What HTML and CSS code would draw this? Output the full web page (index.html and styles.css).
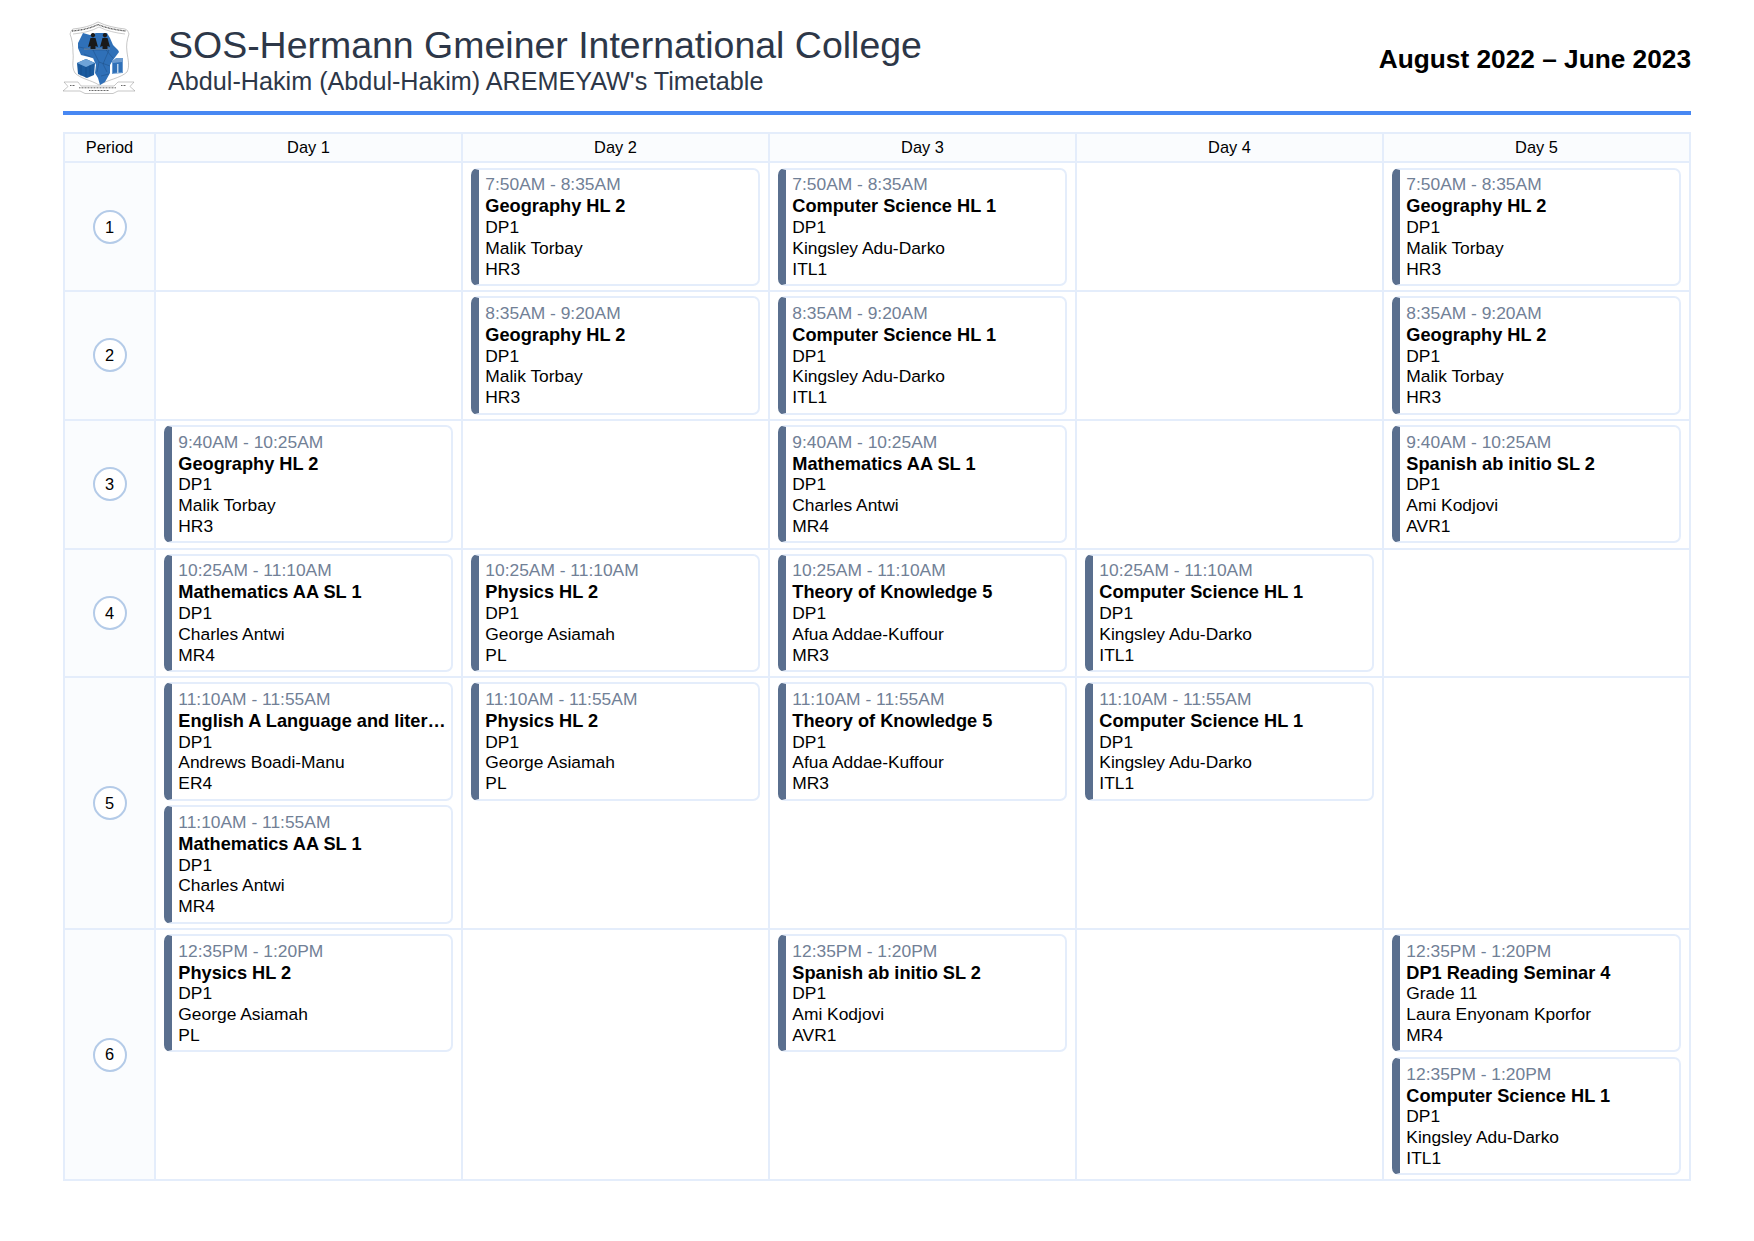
FILE: index.html
```html
<!DOCTYPE html>
<html lang="en">
<head>
  <meta charset="UTF-8" />
  <meta name="viewport" content="width=device-width, initial-scale=1.0" />
  <title>Timetable</title>
  <link rel="stylesheet" href="styles.css">
</head>
<body>
  <div class="page">
    <header class="top">
      <svg class="logo" viewBox="0 0 72 74" xmlns="http://www.w3.org/2000/svg">
        <path fill="#fff" stroke="#8f8f8f" stroke-width="0.5" d="M7 14C8 12 8 10 10 9C20 8 28 6 35 2C43 6 53 8 62 9C65 10 65 12 66 14C64 20 63 25 64 32C65 40 67 46 64 52C58 58 44 60 36 65C28 60 18 59 12 53C8 46 11 40 10 33C10 25 9 19 7 14Z"/>
        <path fill="none" stroke="#9a9a9a" stroke-width="0.5" d="M10 14C20 13 29 11 36 7C44 11 53 13 62 14"/>
        <path fill="none" stroke="#555" stroke-width="1.300" stroke-dasharray="1 0.500" d="M9 11C20 10 28 8 35 4.500C43 8 53 10 63 11"/>
        <path fill="#2f70b8" d="M20 13L27 15L33 13L44 13L47 18L50 25L55 30L56 32L50 40L47 45L47 53L42 62L37 65L35 58L32 53L33 45L30 38L26 37L18 35L15 28L15 23Z"/>
        <path fill="none" stroke="#16406e" stroke-width="0.350" d="M16 27L30 30L36 42L34 52M30 30L46 30L40 44L44 52M36 42L47 46M21 34L30 38M38 56L46 54M43 30L50 38"/>
        <path stroke="#8f8f8f" stroke-width="0.700" d="M21 29H47"/>
        <path fill="#1a5a9e" d="M14 43L23 39L32 43L31 55L24 58L15 54Z"/>
        <path fill="#6ea3d8" d="M14 43L23 39L32 43L23 47Z"/>
        <path stroke="#0f3f75" stroke-width="0.400" d="M23 47V58M18 45V56M27 45V56"/>
        <path fill="#6b9bd0" d="M49 41L53 38L60 38L60 53L49 54Z"/>
        <path fill="#2f70b8" d="M50 43L59 42L59 52L50 53Z"/>
        <path fill="#bcd3ea" d="M54 44H55.500V53H54Z"/>
        <path fill="#1a1a1a" d="M30 13a2.200 2.200 0 1 1-.1 0ZM25 27L27.500 18L32.500 18L35 27L32.500 26L32.500 29H27.500L27.500 26ZM42 13a2.200 2.200 0 1 1-.1 0ZM37 27L39.500 18L44.500 18L47 27L44.500 26L44.500 29H39.500L39.500 26Z"/>
        <path fill="#fff" stroke="#8f8f8f" stroke-width="0.500" d="M0 71L5 66.500L1 62H15L18 66H51L55 62H71L67 66.500L72 71H55L50 73.500H22L17 71Z"/>
        <path fill="none" stroke="#444" stroke-width="0.800" stroke-dasharray="1 0.500" d="M7 65.500H12M58 65.500H63M16 67.800H53M26 70.500H46"/>
      </svg>
      <div class="title-block">
        <h1>SOS-Hermann Gmeiner International College</h1>
        <h2>Abdul-Hakim (Abdul-Hakim) AREMEYAW's Timetable</h2>
      </div>
      <div class="range">August 2022 – June 2023</div>
    </header>

    <table class="timetable">
      <thead>
        <tr>
          <th class="period-col">Period</th>
          <th>Day 1</th>
          <th>Day 2</th>
          <th>Day 3</th>
          <th>Day 4</th>
          <th>Day 5</th>
        </tr>
      </thead>
      <tbody>
        <tr>
          <td class="period"><span class="num">1</span></td>
          <td></td>
          <td>
            <div class="card"><p class="time">7:50AM - 8:35AM</p><p class="subject">Geography HL 2</p><p>DP1</p><p>Malik Torbay</p><p>HR3</p></div>
          </td>
          <td>
            <div class="card"><p class="time">7:50AM - 8:35AM</p><p class="subject">Computer Science HL 1</p><p>DP1</p><p>Kingsley Adu-Darko</p><p>ITL1</p></div>
          </td>
          <td></td>
          <td>
            <div class="card"><p class="time">7:50AM - 8:35AM</p><p class="subject">Geography HL 2</p><p>DP1</p><p>Malik Torbay</p><p>HR3</p></div>
          </td>
        </tr>
        <tr>
          <td class="period"><span class="num">2</span></td>
          <td></td>
          <td>
            <div class="card"><p class="time">8:35AM - 9:20AM</p><p class="subject">Geography HL 2</p><p>DP1</p><p>Malik Torbay</p><p>HR3</p></div>
          </td>
          <td>
            <div class="card"><p class="time">8:35AM - 9:20AM</p><p class="subject">Computer Science HL 1</p><p>DP1</p><p>Kingsley Adu-Darko</p><p>ITL1</p></div>
          </td>
          <td></td>
          <td>
            <div class="card"><p class="time">8:35AM - 9:20AM</p><p class="subject">Geography HL 2</p><p>DP1</p><p>Malik Torbay</p><p>HR3</p></div>
          </td>
        </tr>
        <tr>
          <td class="period"><span class="num">3</span></td>
          <td>
            <div class="card"><p class="time">9:40AM - 10:25AM</p><p class="subject">Geography HL 2</p><p>DP1</p><p>Malik Torbay</p><p>HR3</p></div>
          </td>
          <td></td>
          <td>
            <div class="card"><p class="time">9:40AM - 10:25AM</p><p class="subject">Mathematics AA SL 1</p><p>DP1</p><p>Charles Antwi</p><p>MR4</p></div>
          </td>
          <td></td>
          <td>
            <div class="card"><p class="time">9:40AM - 10:25AM</p><p class="subject">Spanish ab initio SL 2</p><p>DP1</p><p>Ami Kodjovi</p><p>AVR1</p></div>
          </td>
        </tr>
        <tr>
          <td class="period"><span class="num">4</span></td>
          <td>
            <div class="card"><p class="time">10:25AM - 11:10AM</p><p class="subject">Mathematics AA SL 1</p><p>DP1</p><p>Charles Antwi</p><p>MR4</p></div>
          </td>
          <td>
            <div class="card"><p class="time">10:25AM - 11:10AM</p><p class="subject">Physics HL 2</p><p>DP1</p><p>George Asiamah</p><p>PL</p></div>
          </td>
          <td>
            <div class="card"><p class="time">10:25AM - 11:10AM</p><p class="subject">Theory of Knowledge 5</p><p>DP1</p><p>Afua Addae-Kuffour</p><p>MR3</p></div>
          </td>
          <td>
            <div class="card"><p class="time">10:25AM - 11:10AM</p><p class="subject">Computer Science HL 1</p><p>DP1</p><p>Kingsley Adu-Darko</p><p>ITL1</p></div>
          </td>
          <td></td>
        </tr>
        <tr>
          <td class="period"><span class="num">5</span></td>
          <td>
            <div class="card"><p class="time">11:10AM - 11:55AM</p><p class="subject">English A Language and liter…</p><p>DP1</p><p>Andrews Boadi-Manu</p><p>ER4</p></div>
            <div class="card"><p class="time">11:10AM - 11:55AM</p><p class="subject">Mathematics AA SL 1</p><p>DP1</p><p>Charles Antwi</p><p>MR4</p></div>
          </td>
          <td>
            <div class="card"><p class="time">11:10AM - 11:55AM</p><p class="subject">Physics HL 2</p><p>DP1</p><p>George Asiamah</p><p>PL</p></div>
          </td>
          <td>
            <div class="card"><p class="time">11:10AM - 11:55AM</p><p class="subject">Theory of Knowledge 5</p><p>DP1</p><p>Afua Addae-Kuffour</p><p>MR3</p></div>
          </td>
          <td>
            <div class="card"><p class="time">11:10AM - 11:55AM</p><p class="subject">Computer Science HL 1</p><p>DP1</p><p>Kingsley Adu-Darko</p><p>ITL1</p></div>
          </td>
          <td></td>
        </tr>
        <tr>
          <td class="period"><span class="num">6</span></td>
          <td>
            <div class="card"><p class="time">12:35PM - 1:20PM</p><p class="subject">Physics HL 2</p><p>DP1</p><p>George Asiamah</p><p>PL</p></div>
          </td>
          <td></td>
          <td>
            <div class="card"><p class="time">12:35PM - 1:20PM</p><p class="subject">Spanish ab initio SL 2</p><p>DP1</p><p>Ami Kodjovi</p><p>AVR1</p></div>
          </td>
          <td></td>
          <td>
            <div class="card"><p class="time">12:35PM - 1:20PM</p><p class="subject">DP1 Reading Seminar 4</p><p>Grade 11</p><p>Laura Enyonam Kporfor</p><p>MR4</p></div>
            <div class="card"><p class="time">12:35PM - 1:20PM</p><p class="subject">Computer Science HL 1</p><p>DP1</p><p>Kingsley Adu-Darko</p><p>ITL1</p></div>
          </td>
        </tr>
      </tbody>
    </table>
  </div>
</body>
</html>
```

FILE: styles.css
```css
body {
  margin: 0;
  font-family: "Liberation Sans", Arial, sans-serif;
  background-color: #fff;
  color: #000;
}
.page {
  padding: 20px 63px;
}
.top {
  display: flex;
  align-items: flex-start;
  height: 91px;
  border-bottom: 4px solid #4888f3;
  margin-bottom: 17px;
}
.logo {
  width: 72px;
  height: 74px;
  flex-shrink: 0;
}
.title-block {
  flex: 1;
  margin-left: 33px;
  padding-top: 3px;
  color: #2d3748;
}
.title-block h1 {
  margin: 0;
  font-size: 37.47px;
  font-weight: normal;
  line-height: 44px;
}
.title-block h2 {
  margin: 0;
  font-size: 25.2px;
  font-weight: normal;
  line-height: 29px;
}
.range {
  font-size: 26.25px;
  font-weight: bold;
  line-height: 34px;
  padding-top: 22px;
}
.timetable {
  width: 1628px;
  table-layout: fixed;
  border-collapse: collapse;
  font-size: 17.4px;
  line-height: 20.8px;
}
.timetable th,
.timetable td {
  border: 2px solid #e4edfb;
}
.timetable th {
  font-size: 16.4px;
  font-weight: normal;
  line-height: 19.7px;
  padding: 3.900px 0;
  background-color: #fafcfe;
}
.timetable td {
  padding: 4.200px 8.300px;
  vertical-align: top;
}
.period-col {
  width: 89px;
}
.timetable td.period {
  padding: 0;
  vertical-align: middle;
  background-color: #fafcfe;
}
.num {
  display: flex;
  justify-content: center;
  align-items: center;
  width: 34px;
  height: 34px;
  margin: 0 auto;
  box-sizing: border-box;
  border: 2px solid #b4cbe8;
  border-radius: 50%;
  background-color: #fff;
  font-size: 16.4px;
  line-height: 1;
}
.card {
  box-sizing: border-box;
  height: 118.3px;
  padding: 2.500px 3px 0 6px;
  border: 2px solid #e4edfb;
  border-left: 8px solid #5a6f8e;
  border-radius: 7px;
  overflow: hidden;
}
.card + .card {
  margin-top: 4.700px;
}
.card p {
  margin: 0;
  white-space: nowrap;
}
.card .time {
  color: #718096;
  line-height: 24px;
}
.card .subject {
  font-weight: bold;
  font-size: 18.2px;
}
```
